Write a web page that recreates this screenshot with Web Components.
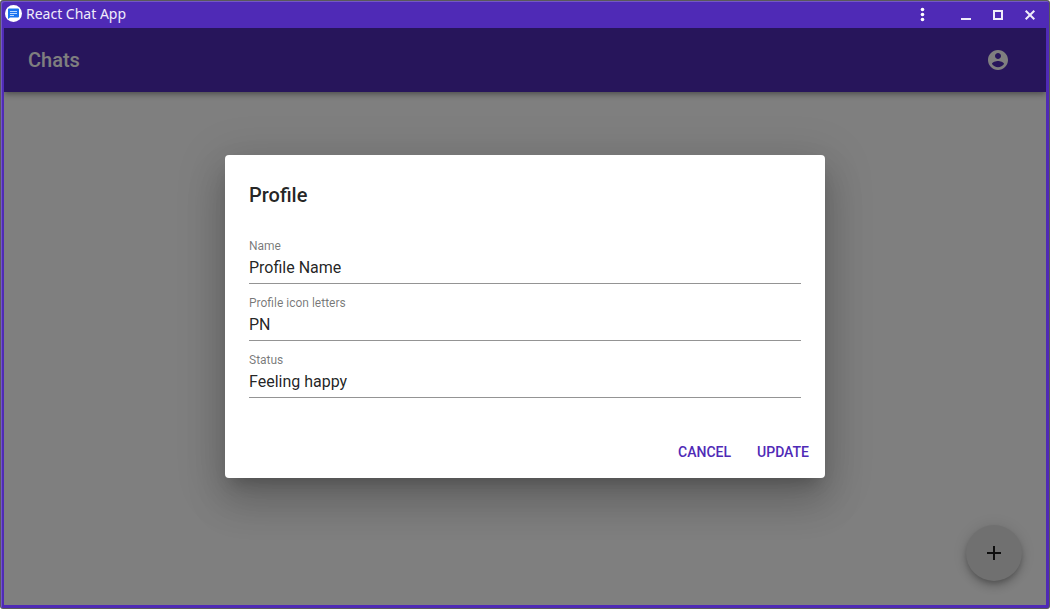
<!DOCTYPE html>
<html lang="en">
<head>
<meta charset="utf-8">
<meta name="viewport" content="width=device-width, initial-scale=1">
<title>React Chat App</title>
<style>
  html, body { height: 100%; margin: 0; }
  body {
    --primary: #4f2ab6;
    --ink: rgba(0, 0, 0, .87);
    background: #fff;
    font-family: Roboto, "Liberation Sans", sans-serif;
    color: var(--ink);
  }
</style>
</head>
<body>
<app-window heading="React Chat App">
  <app-bar heading="Chats"></app-bar>
  <add-button></add-button>
  <modal-dialog slot="overlay" heading="Profile">
    <text-field label="Name" value="Profile Name"></text-field>
    <text-field label="Profile icon letters" value="PN"></text-field>
    <text-field label="Status" value="Feeling happy"></text-field>
    <text-button slot="actions">CANCEL</text-button>
    <text-button slot="actions">UPDATE</text-button>
  </modal-dialog>
</app-window>

<script>
class Base extends HTMLElement {
  constructor() {
    super();
    this.attachShadow({ mode: 'open' });
  }
  connectedCallback() {
    this.shadowRoot.innerHTML = '<style>*{box-sizing:border-box}button{font:inherit;color:inherit;background:none;border:0;margin:0;padding:0}</style>' + this.view();
  }
  attr(name) { return this.getAttribute(name) || ''; }
}

customElements.define('app-window', class extends Base {
  view() {
    return `
    <style>
      :host { display: block; height: 100vh; box-sizing: border-box; background: #5a5a5a; padding: 1px; border-radius: 3px; }
      .frame {
        display: flex; flex-direction: column; height: 100%;
        background: var(--primary);
        border-radius: 3px 3px 2px 2px;
        box-shadow: inset 1px 1px 0 #7356c8;
        padding: 0 3px 3px 3px;
      }
      header { display: flex; align-items: center; flex: none; height: 27px; padding-bottom: 2px; color: #f0ecfa; }
      .logo { flex: none; margin: 0 4px 0 1px; }
      h1 { flex: 1; margin: 0; font: 400 14px/24px "Noto Sans", "Open Sans", sans-serif; }
      nav { display: flex; gap: 16px; padding-right: 8px; }
      nav button { width: 16px; height: 16px; }
      nav button:first-child { margin-right: 12px; }
      nav svg { display: block; }
      main { position: relative; flex: 1; min-height: 0; display: flex; flex-direction: column; background: #fff; overflow: hidden; }
    </style>
    <div class="frame">
      <header>
        <svg class="logo" width="17" height="17" viewBox="0 0 17 17" aria-hidden="true">
          <circle cx="8.5" cy="8.5" r="8.5" fill="#fff"/>
          <path d="M4 3.500h9a1 1 0 0 1 1 1v7a1 1 0 0 1-1 1H5L3 14V4.500a1 1 0 0 1 1-1z" fill="#1a73f0"/>
          <path d="M5 6.500h7M5 8.500h7M5 10.500h4" stroke="#b9d8ff" stroke-width="1"/>
        </svg>
        <h1>${this.attr('heading')}</h1>
        <nav>
          <button aria-label="Menu"><svg width="16" height="16" fill="#fff"><circle cx="8.5" cy="3.5" r="1.8"/><circle cx="8.5" cy="8.5" r="1.8"/><circle cx="8.5" cy="13.500" r="1.8"/></svg></button>
          <button aria-label="Minimize"><svg width="16" height="16" fill="currentColor"><path d="M3 12h10v2H3z"/></svg></button>
          <button aria-label="Maximize"><svg width="16" height="16" fill="none" stroke="currentColor" stroke-width="2"><path d="M4 5h8v8H4z"/></svg></button>
          <button aria-label="Close"><svg width="16" height="16" fill="none" stroke="currentColor" stroke-width="2"><path d="M3.700 4.700l8.600 8.600M12.300 4.700l-8.600 8.600"/></svg></button>
        </nav>
      </header>
      <main><slot></slot><slot name="overlay"></slot></main>
    </div>`;
  }
});

customElements.define('app-bar', class extends Base {
  view() {
    return `
    <style>
      :host {
        display: flex; align-items: center; justify-content: space-between;
        height: 64px; padding: 0 24px; box-sizing: border-box; flex: none;
        background: var(--primary); color: #fff;
        box-shadow: 0 2px 4px -1px rgba(0,0,0,.2), 0 4px 5px 0 rgba(0,0,0,.14), 0 1px 10px 0 rgba(0,0,0,.12);
      }
      h2 { margin: 0; font-size: 20px; line-height: 32px; font-weight: 500; }
      button { width: 48px; height: 48px; padding: 12px; }
      svg { display: block; }
    </style>
    <h2>${this.attr('heading')}</h2>
    <button aria-label="Account"><svg width="24" height="24" viewBox="0 0 24 24" fill="currentColor"><path d="M12 2C6.48 2 2 6.48 2 12s4.48 10 10 10 10-4.48 10-10S17.52 2 12 2zm0 3c1.66 0 3 1.34 3 3s-1.34 3-3 3-3-1.34-3-3 1.34-3 3-3zm0 14.2c-2.5 0-4.71-1.28-6-3.22.03-1.99 4-3.08 6-3.08 1.99 0 5.97 1.09 6 3.08-1.29 1.94-3.5 3.22-6 3.22z"/></svg></button>`;
  }
});

customElements.define('add-button', class extends Base {
  view() {
    return `
    <style>
      :host { position: absolute; right: 24px; bottom: 24px; }
      button {
        display: flex; align-items: center; justify-content: center;
        width: 56px; height: 56px; border-radius: 50%;
        background: #e0e0e0; color: var(--ink);
        box-shadow: 0 3px 5px -1px rgba(0,0,0,.2), 0 6px 10px 0 rgba(0,0,0,.14), 0 1px 18px 0 rgba(0,0,0,.12);
      }
    </style>
    <button aria-label="Add chat"><svg width="24" height="24" viewBox="0 0 24 24" fill="currentColor"><path d="M19 13h-6v6h-2v-6H5v-2h6V5h2v6h6v2z"/></svg></button>`;
  }
});

customElements.define('modal-dialog', class extends Base {
  view() {
    return `
    <style>
      :host {
        position: absolute; inset: 0; display: flex; align-items: center; justify-content: center;
        padding: 32px; box-sizing: border-box; background: rgba(0,0,0,.5);
      }
      section {
        width: 100%; max-width: 600px; background: #fff; border-radius: 4px;
        box-shadow: 0 11px 15px -7px rgba(0,0,0,.2), 0 24px 38px 3px rgba(0,0,0,.14), 0 9px 46px 8px rgba(0,0,0,.12);
      }
      h2 { margin: 0; padding: 24px 24px 28px; font-size: 20px; line-height: 32px; font-weight: 500; }
      .fields { display: grid; gap: 12px; padding: 0 24px; }
      footer { display: flex; justify-content: flex-end; gap: 10px; padding: 36px 8px 8px; }
    </style>
    <section role="dialog" aria-modal="true" aria-labelledby="title">
      <h2 id="title">${this.attr('heading')}</h2>
      <div class="fields"><slot></slot></div>
      <footer><slot name="actions"></slot></footer>
    </section>`;
  }
});

customElements.define('text-field', class extends Base {
  view() {
    return `
    <style>
      :host { display: block; }
      label { display: block; font-size: 12px; line-height: 14px; color: rgba(0,0,0,.54); }
      input {
        display: block; width: 100%; height: 31px; margin: 0; padding: 0 0 1px; border: 0;
        border-bottom: 1px solid rgba(0,0,0,.42); border-radius: 0; outline: 0;
        background: none; color: var(--ink); font: 400 16px/20px Roboto, "Liberation Sans", sans-serif;
      }
    </style>
    <label for="field">${this.attr('label')}</label>
    <input id="field" type="text" value="${this.attr('value')}">`;
  }
});

customElements.define('text-button', class extends Base {
  view() {
    return `
    <style>
      :host { display: block; }
      button { min-width: 64px; height: 36px; padding: 0 8px; border-radius: 4px; font-size: 14px; font-weight: 500; color: var(--primary); }
    </style>
    <button><slot></slot></button>`;
  }
});
</script>
</body>
</html>
